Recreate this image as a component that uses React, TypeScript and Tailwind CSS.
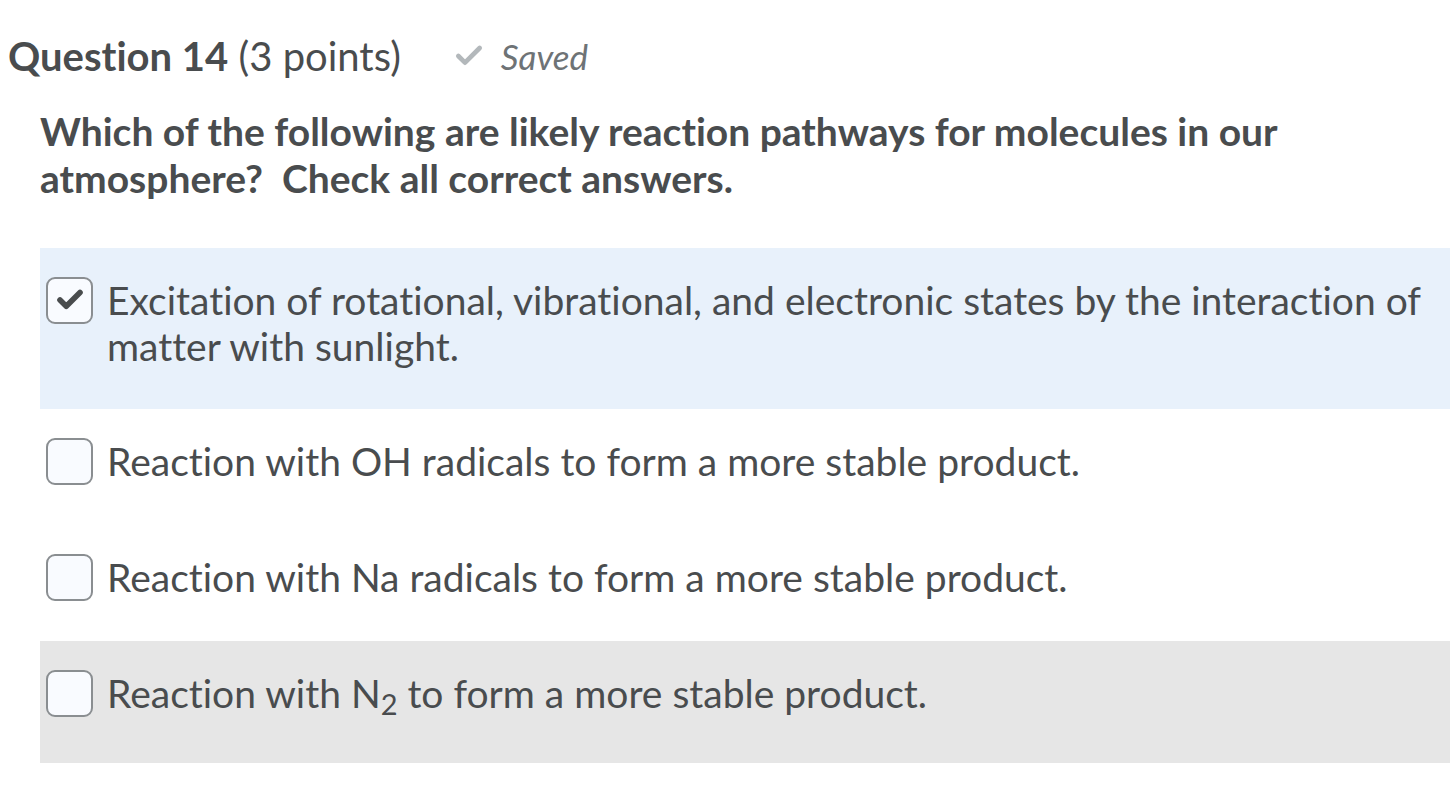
import { Check } from 'lucide-react';

interface Choice {
  id: string;
  text: React.ReactNode;
  checked: boolean;
  tone: 'selected' | 'hover' | 'plain';
}

const choices: Choice[] = [
  {
    id: 'a',
    text: 'Excitation of rotational, vibrational, and electronic states by the interaction of matter with sunlight.',
    checked: true,
    tone: 'selected',
  },
  { id: 'b', text: 'Reaction with OH radicals to form a more stable product.', checked: false, tone: 'plain' },
  { id: 'c', text: 'Reaction with Na radicals to form a more stable product.', checked: false, tone: 'plain' },
  {
    id: 'd',
    text: (
      <>
        Reaction with N<sub className="text-[29px]">2</sub> to form a more stable product.
      </>
    ),
    checked: false,
    tone: 'hover',
  },
];

function Checkbox({ checked }: { checked: boolean }) {
  return (
    <span className="flex h-[47px] w-[47px] shrink-0 items-center justify-center rounded-[9px] border-2 border-[#8a8e91] bg-[#f9fbff]">
      {checked && <Check className="h-[30px] w-[30px] text-[#494c4e]" strokeWidth={4.5} />}
    </span>
  );
}

export default function App() {
  return (
    <div
      className="min-h-[806px] bg-white text-[#494c4e] [font-variant-ligatures:none]"
      style={{ fontFamily: 'Lato, "Open Sans", sans-serif' }}
    >
      <div className="flex items-center gap-[52px] pl-[8px] pt-[30px]">
        <h2 className="text-[40px] leading-[50px]">
          <span className="font-bold">Question 14</span> (3 points)
        </h2>
        <span className="flex items-center gap-[16px] text-[#6e7376]">
          <Check className="h-[32px] w-[32px] text-[#b3b8bb]" strokeWidth={3.5} />
          <span className="text-[35px] italic">Saved</span>
        </span>
      </div>

      <p className="mt-[25px] pl-[40px] pr-[20px] text-[39px] font-bold leading-[47px]">
        Which of the following are likely reaction pathways for molecules in our atmosphere?&nbsp; Check all correct answers.
      </p>

      <ul className="mt-[46px] ml-[40px]">
        {choices.map((c, i) => (
          <li
            key={c.id}
            className={
              'flex items-start gap-[14px] pl-[6px] pr-[10px] pt-[29px] ' +
              (i === choices.length - 1 ? 'pb-[46px] ' : 'pb-[40px] ') +
              (c.tone === 'selected' ? 'bg-[#e8f1fb]' : c.tone === 'hover' ? 'bg-[#e6e6e6]' : '')
            }
          >
            <Checkbox checked={c.checked} />
            <span className="text-[39px] leading-[46px]">{c.text}</span>
          </li>
        ))}
      </ul>
    </div>
  );
}
